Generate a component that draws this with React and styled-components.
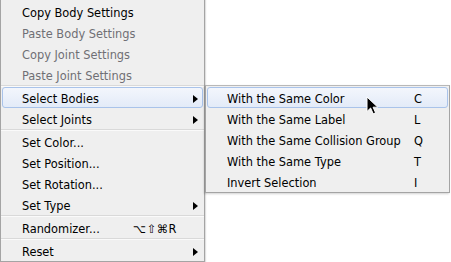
import React from 'react';
import styled, { createGlobalStyle } from 'styled-components';

const GlobalStyle = createGlobalStyle`
  html, body {
    margin: 0;
    padding: 0;
    background: #ffffff;
  }
  body {
    font-family: "DejaVu Sans", "Liberation Sans", sans-serif;
    font-size: 11.4px;
    -webkit-font-smoothing: antialiased;
  }
`;

const Stage = styled.div`
  position: relative;
  display: flex;
  align-items: flex-start;
  width: 451px;
  height: 262px;
  overflow: hidden;
`;

const Menu = styled.div`
  box-sizing: border-box;
  width: ${(p) => p.$width}px;
  margin-top: ${(p) => p.$top || 0}px;
  background: #efefef;
  border: 1px solid #a4a4a4;
  border-top: ${(p) => (p.$clipped ? 'none' : '1px solid #b8b8b8')};
  padding-top: 1px;
  box-shadow: ${(p) => (p.$shadow ? '-1px 1px 2px rgba(0, 0, 0, 0.18)' : '1px 0 1px rgba(0, 0, 0, 0.12)')};
  display: flex;
  flex-direction: column;
`;

const Row = styled.div`
  box-sizing: border-box;
  height: 21px;
  margin: 0 1px;
  display: grid;
  grid-template-columns: ${(p) => p.$labelWidth}px 1fr 5px;
  align-items: center;
  padding: 0 4px 0 ${(p) => p.$indent}px;
  border-radius: 3px;
  border: 1px solid ${(p) => (p.$active ? '#a9c3ea' : 'transparent')};
  background: ${(p) => (p.$active ? 'linear-gradient(#f3f6fc, #e3ebf8)' : 'transparent')};
  color: ${(p) => (p.$disabled ? '#6f6f75' : '#000000')};
  white-space: nowrap;
`;

const Label = styled.span`
  line-height: 19px;
  padding-top: 2px;
  margin-left: -1px;
`;

const Shortcut = styled.span`
  line-height: 19px;
  padding-top: 2px;
  margin-left: -1px;
  letter-spacing: 0.5px;
`;

const Arrow = styled.span`
  width: 0;
  height: 0;
  margin-top: 1px;
  border-left: 5px solid #000;
  border-top: 4px solid transparent;
  border-bottom: 4px solid transparent;
`;

const Separator = styled.div`
  height: 0;
  border-top: 1px solid #d9d9d9;
  border-bottom: 1px solid #fafafa;
`;

const Cursor = styled.svg`
  position: absolute;
  left: 366px;
  top: 96px;
  width: 13px;
  height: 19px;
`;

const mainItems = [
  { label: 'Copy Body Settings' },
  { label: 'Paste Body Settings', disabled: true },
  { label: 'Copy Joint Settings', disabled: true },
  { label: 'Paste Joint Settings', disabled: true },
  { sep: true },
  { label: 'Select Bodies', sub: true, active: true },
  { label: 'Select Joints', sub: true },
  { sep: true },
  { label: 'Set Color...' },
  { label: 'Set Position...' },
  { label: 'Set Rotation...' },
  { label: 'Set Type', sub: true },
  { sep: true },
  { label: 'Randomizer...', key: '⌥⇧⌘R' },
  { sep: true },
  { label: 'Reset', sub: true },
];

const subItems = [
  { label: 'With the Same Color', key: 'C', active: true },
  { label: 'With the Same Label', key: 'L' },
  { label: 'With the Same Collision Group', key: 'Q' },
  { label: 'With the Same Type', key: 'T' },
  { label: 'Invert Selection', key: 'I' },
];

function MenuRows({ items, labelWidth, indent }) {
  return items.map((item, i) =>
    item.sep ? (
      <Separator key={i} />
    ) : (
      <Row
        key={i}
        $labelWidth={labelWidth}
        $indent={indent}
        $active={item.active}
        $disabled={item.disabled}
      >
        <Label>{item.label}</Label>
        <Shortcut>{item.key || ''}</Shortcut>
        {item.sub ? <Arrow /> : <span />}
      </Row>
    )
  );
}

export default function App() {
  return (
    <Stage>
      <GlobalStyle />
      <Menu $width={205} $clipped>
        <MenuRows items={mainItems} labelWidth={111} indent={20} />
      </Menu>
      <Menu $width={245} $top={85} $shadow>
        <MenuRows items={subItems} labelWidth={187} indent={20} />
      </Menu>
      <Cursor viewBox="0 0 13 19">
        <path
          d="M1 1 L1 15.5 L4.6 12 L7.2 17.8 L9.6 16.8 L7.1 11.2 L11.8 11.2 Z"
          fill="#000"
          stroke="#fff"
          strokeWidth="1"
          strokeLinejoin="round"
        />
      </Cursor>
    </Stage>
  );
}
